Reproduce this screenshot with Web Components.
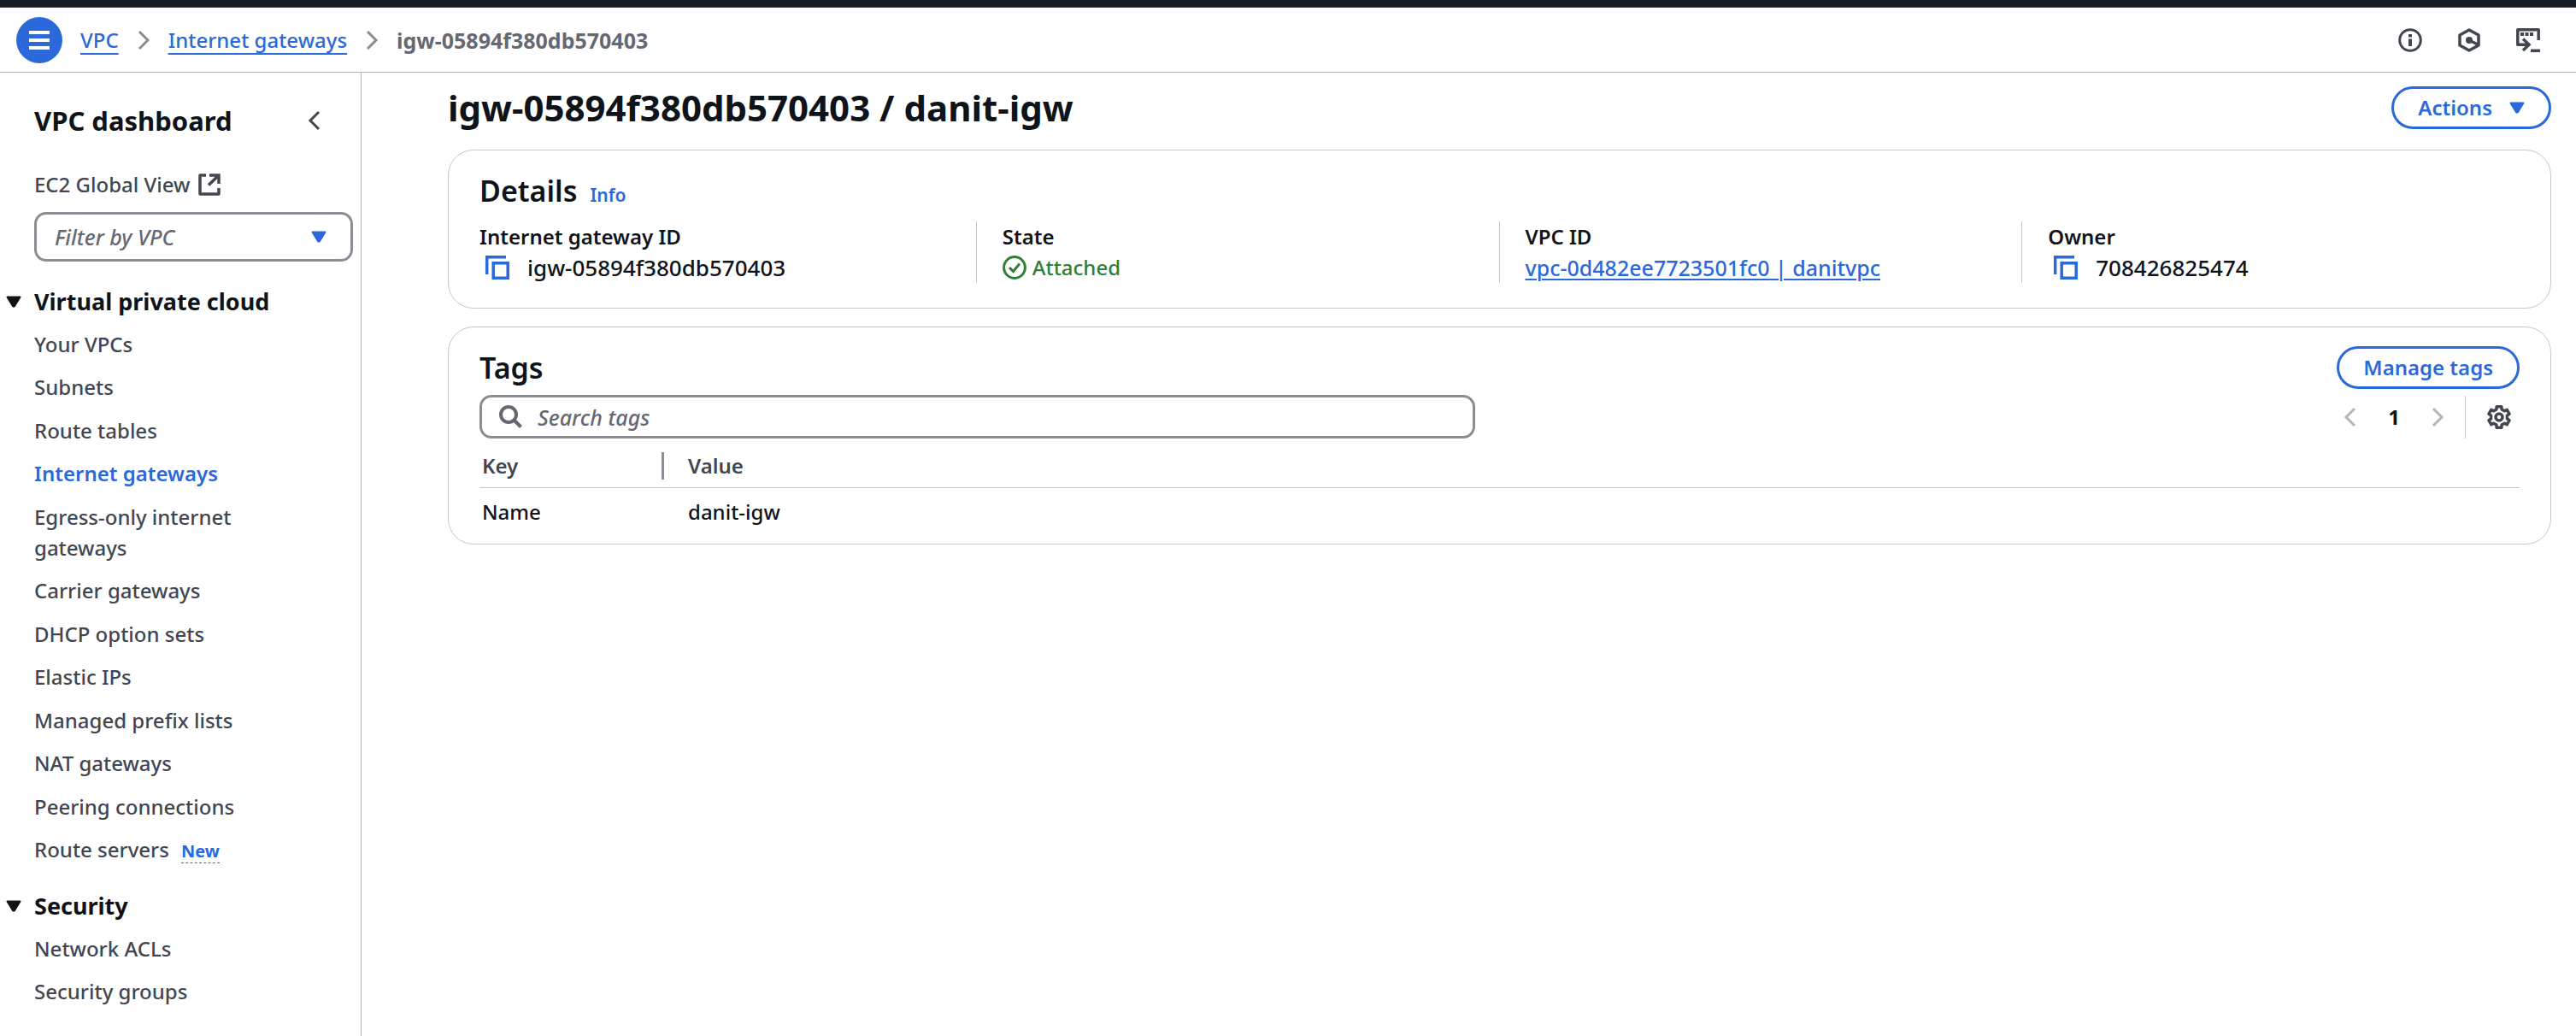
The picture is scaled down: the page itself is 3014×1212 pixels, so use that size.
<!DOCTYPE html>
<html lang="en">
<head>
<meta charset="utf-8">
<title>igw-05894f380db570403 | VPC Console</title>
<style>
  :root {
    --blue: #2b69da;
    --ink: #0f141a;
    --muted: #424650;
    --hint: #656871;
    --line: #c6c6cd;
    --field: #8c8c94;
    --bold: 620;
    --heading: 700;
  }
  body {
    margin: 0;
    background: #fff;
    color: var(--ink);
    font: 460 24px/36px "Noto Sans", "Open Sans", sans-serif;
  }
</style>
</head>
<body>
<console-app></console-app>
<script>
const define = (name, html, setup) => {
  const template = document.createElement('template');
  template.innerHTML = html;
  customElements.define(name, class extends HTMLElement {
    constructor() {
      super();
      this.attachShadow({ mode: 'open' }).append(template.content.cloneNode(true));
    }
    connectedCallback() {
      if (setup && !this.ready) { this.ready = true; setup(this, this.shadowRoot); }
    }
  });
};

/* Outline of the six-lobed settings gear, centred in a 28x30 box. */
const gear = () => {
  const points = [];
  for (let k = 0; k < 6; k++) {
    for (const [offset, radius] of [[-13, 12.6], [13, 12.6], [19, 9.6], [41, 9.6]]) {
      const a = (k * 60 - 90 + offset) * Math.PI / 180;
      points.push((14 + radius * Math.cos(a)).toFixed(2) + ' ' + (15 + radius * Math.sin(a)).toFixed(2));
    }
  }
  return 'M' + points.join('L') + 'Z';
};

/* name: [width, height, stroke width, markup] */
const icons = {
  menu: [24, 22, 4, '<path d="M0 2h24M0 11h24M0 20h24"/>'],
  right: [14, 24, 3, '<path d="M2 2l10 10L2 22"/>'],
  left: [14, 24, 3, '<path d="M12 2L2 12l10 10"/>'],
  info: [28, 28, 3, '<circle cx="14" cy="14" r="12.3"/><path stroke-width="4" d="M14 7v3.5M14 12.500v8.500"/>'],
  hex: [26, 28, 3.5, '<path stroke-linejoin="round" d="M13 2l11 6v12l-11 6-11-6V8z"/><circle cx="13" cy="14" r="4" fill="currentColor" stroke="none"/><path d="M13 14l11 5.500"/>'],
  shell: [28, 28, 3.5, '<path stroke-linejoin="round" d="M26.200 14V1.800H1.800v17.400H16"/><path d="M8 12.500l7 6.700-7 6.700"/><path d="M17 26.300h11"/><path stroke-width="4" stroke-dasharray="4 1.500" d="M5 7h15"/>'],
  external: [26, 26, 3.5, '<path stroke-linejoin="round" d="M9 2H2v22h22v-7"/><path d="M13 2h11v10M24 2L12 13.500"/>'],
  down: [18, 14, 2, '<path fill="currentColor" stroke-linejoin="round" d="M1.500 1.500h15L9.800 12.600h-1.600z"/>'],
  copy: [28, 28, 3.5, '<path d="M24 1.700H1.700V22"/><path d="M9.200 8.800h17v17.500h-17z"/>'],
  check: [28, 28, 3, '<circle cx="14" cy="14" r="12.400"/><path d="M8 14l4.500 4.500L20 9.500"/>'],
  search: [27, 27, 4, '<circle cx="11" cy="11" r="9"/><path d="M17.500 17.500l8 8"/>'],
  gear: [28, 30, 3.5, '<path stroke-linejoin="round" d="' + gear() + '"/><circle cx="14" cy="15" r="4"/>']
};

define('ui-icon', `
  <style>:host { display: inline-flex; flex: none; } svg { display: block; overflow: visible; }</style>
  <svg fill="none" stroke="currentColor" aria-hidden="true"></svg>`, (el, root) => {
  const [w, h, stroke, markup] = icons[el.getAttribute('name')];
  const svg = root.querySelector('svg');
  svg.setAttribute('width', w);
  svg.setAttribute('height', h);
  svg.setAttribute('viewBox', `0 0 ${w} ${h}`);
  svg.setAttribute('stroke-width', stroke);
  svg.innerHTML = markup;
});

define('pill-button', `
  <style>
    :host { display: block; flex: none; }
    button { display: flex; align-items: center; gap: 20px; height: 50px; box-sizing: border-box; padding: 0 28px;
      border: 3px solid var(--blue); border-radius: 25px; background: #fff; color: var(--blue);
      font: inherit; font-weight: var(--bold); cursor: pointer; }
  </style>
  <button type="button"><slot></slot></button>`);

define('icon-button', `
  <style>
    :host { display: block; flex: none; }
    button { display: flex; padding: 0; border: 0; background: none; color: inherit; cursor: pointer; }
  </style>
  <button type="button"><slot></slot></button>`, (el, root) =>
  root.querySelector('button').setAttribute('aria-label', el.getAttribute('label')));

define('breadcrumb-bar', `
  <style>
    :host { display: flex; align-items: center; justify-content: space-between; height: 75px;
      padding: 0 42px 0 19px; border-bottom: 1px solid #b4b4bb; }
    nav, .tools, ol { display: flex; align-items: center; }
    nav { gap: 21px; }
    ol { list-style: none; margin: 0; padding: 0; gap: 22px; color: var(--field); }
    .menu { display: flex; align-items: center; justify-content: center; width: 54px; height: 54px; padding: 0;
      border: 0; border-radius: 50%; background: var(--blue); color: #fff; }
    a { color: var(--blue); text-decoration: underline 2px; text-underline-offset: 6px; text-decoration-skip-ink: none; }
    li { display: flex; align-items: center; }
    [aria-current] { font-size: 25px; font-weight: 700; color: var(--hint); }
    .tools { gap: 42px; color: var(--muted); }
  </style>
  <nav aria-label="Breadcrumbs">
    <button class="menu" type="button" aria-label="Toggle navigation"><ui-icon name="menu"></ui-icon></button>
    <ol>
      <li><a href="#vpc">VPC</a></li>
      <li aria-hidden="true"><ui-icon name="right"></ui-icon></li>
      <li><a href="#gateways">Internet gateways</a></li>
      <li aria-hidden="true"><ui-icon name="right"></ui-icon></li>
      <li aria-current="page">igw-05894f380db570403</li>
    </ol>
  </nav>
  <div class="tools">
    <icon-button label="Help"><ui-icon name="info"></ui-icon></icon-button>
    <icon-button label="Assistant"><ui-icon name="hex"></ui-icon></icon-button>
    <icon-button label="Shell"><ui-icon name="shell"></ui-icon></icon-button>
  </div>`);

define('nav-group', `
  <style>
    :host { display: block; margin-top: 29px; }
    h3 { margin: 0 0 14px; font-size: 27px; line-height: 36px; font-weight: var(--heading); }
    button { display: flex; align-items: center; gap: 15px; margin-left: -33px; padding: 0; border: 0;
      background: none; color: inherit; font: inherit; }
    div { display: flex; flex-direction: column; gap: 14px; }
  </style>
  <h3><button type="button" aria-expanded="true"><ui-icon name="down"></ui-icon><span></span></button></h3>
  <div role="list"><slot></slot></div>`, (el, root) => {
  root.querySelector('span').textContent = el.getAttribute('heading');
});

define('nav-item', `
  <style>
    :host { display: flex; align-items: baseline; gap: 14px; color: var(--muted); }
    :host(:nth-child(even)) { padding-bottom: 1px; }
    a { color: inherit; text-decoration: none; }
    :host([current]) a { color: var(--blue); font-weight: var(--bold); }
  </style>
  <a href="#"><slot></slot></a><slot name="badge"></slot>`, (el, root) => {
  el.setAttribute('role', 'listitem');
  if (el.hasAttribute('current')) root.querySelector('a').setAttribute('aria-current', 'page');
});

define('side-nav', `
  <style>
    :host { display: block; flex: none; width: 422px; box-sizing: content-box; border-right: 1px solid #b4b4bb; }
    nav { padding: 36px 9px 34px 40px; }
    header { display: flex; align-items: center; justify-content: space-between; padding-right: 38px; color: var(--muted); }
    h2 { margin: 0; color: var(--ink); font-size: 31px; line-height: 40px; font-weight: var(--heading); }
    .global { display: flex; align-items: center; gap: 10px; margin-top: 37px; color: var(--muted); text-decoration: none; }
    label { display: grid; align-items: center; margin-top: 14px; }
    label > * { grid-area: 1 / 1; }
    label ui-icon { justify-self: end; margin-right: 31px; color: var(--blue); pointer-events: none; }
    select { appearance: none; width: 100%; height: 58px; padding: 0 21px; border: 3px solid var(--field);
      border-radius: 14px; background: #fff; color: var(--hint); font: inherit; font-size: 25px; font-style: italic; }
    .new { color: var(--blue); font-size: 20px; line-height: 26px; font-weight: 700; border-bottom: 1px dashed var(--blue); }
  </style>
  <nav aria-label="VPC">
    <header>
      <h2>VPC dashboard</h2>
      <icon-button label="Close navigation"><ui-icon name="left"></ui-icon></icon-button>
    </header>
    <a class="global" href="#global">EC2 Global View <ui-icon name="external"></ui-icon></a>
    <label><select aria-label="Filter by VPC"><option>Filter by VPC</option></select><ui-icon name="down"></ui-icon></label>
    <nav-group heading="Virtual private cloud">
      <nav-item>Your VPCs</nav-item>
      <nav-item>Subnets</nav-item>
      <nav-item>Route tables</nav-item>
      <nav-item current>Internet gateways</nav-item>
      <nav-item>Egress-only internet<br>gateways</nav-item>
      <nav-item>Carrier gateways</nav-item>
      <nav-item>DHCP option sets</nav-item>
      <nav-item>Elastic IPs</nav-item>
      <nav-item>Managed prefix lists</nav-item>
      <nav-item>NAT gateways</nav-item>
      <nav-item>Peering connections</nav-item>
      <nav-item>Route servers<span class="new" slot="badge">New</span></nav-item>
    </nav-group>
    <nav-group heading="Security">
      <nav-item>Network ACLs</nav-item>
      <nav-item>Security groups</nav-item>
    </nav-group>
  </nav>`);

define('ui-panel', `
  <style>
    :host { display: block; padding: 22px 36px 19px; border: 1px solid var(--line); border-radius: 30px; }
    header { display: flex; align-items: center; justify-content: space-between; min-height: 50px; }
    ::slotted([slot="title"]) { display: flex; align-items: baseline; gap: 15px; }
  </style>
  <header><slot name="title"></slot><slot name="actions"></slot></header>
  <slot></slot>`);

define('detail-field', `
  <style>
    :host { display: block; min-width: 0; padding-left: 30px; border-left: 1px solid var(--line); }
    :host(:first-child) { border-color: transparent; }
    .label { font-weight: var(--bold); }
    .value { display: flex; align-items: center; }
  </style>
  <div class="label"></div>
  <div class="value"><slot></slot></div>`, (el, root) => {
  root.querySelector('.label').textContent = el.getAttribute('label');
});

define('copy-value', `
  <style>
    :host { display: flex; align-items: center; gap: 21px; padding-left: 7px; font-size: 26px; }
    icon-button { color: var(--blue); }
  </style>
  <icon-button label="Copy"><ui-icon name="copy"></ui-icon></icon-button><slot></slot>`);

define('details-panel', `
  <style>
    :host { display: block; }
    h2 { margin: 0; font-size: 34px; line-height: 44px; font-weight: 640; }
    .info { color: var(--blue); font-size: 21px; font-weight: var(--bold); text-decoration: none; }
    .grid { display: grid; grid-template-columns: repeat(4, minmax(0, 1fr)); column-gap: 29px;
      margin: 11px 0 10px -31px; }
    .link { color: var(--blue); font-size: 25px; text-decoration: underline 2px; text-underline-offset: 3px; }
    .ok { display: flex; align-items: center; gap: 7px; color: #2f8036; }
  </style>
  <ui-panel>
    <div slot="title"><h2>Details</h2><a class="info" href="#info">Info</a></div>
    <div class="grid">
      <detail-field label="Internet gateway ID"><copy-value>igw-05894f380db570403</copy-value></detail-field>
      <detail-field label="State"><span class="ok"><ui-icon name="check"></ui-icon>Attached</span></detail-field>
      <detail-field label="VPC ID"><a class="link" href="#vpc">vpc-0d482ee7723501fc0 | danitvpc</a></detail-field>
      <detail-field label="Owner"><copy-value>708426825474</copy-value></detail-field>
    </div>
  </ui-panel>`);

define('tags-panel', `
  <style>
    :host { display: block; }
    h2 { margin: 0; font-size: 34px; line-height: 44px; font-weight: 640; }
    .bar, .pager, .search { display: flex; align-items: center; }
    .bar { justify-content: space-between; margin-top: 7px; }
    .search { flex: 0 1 1165px; height: 51px; box-sizing: border-box; gap: 18px; padding: 0 20px;
      border: 3px solid var(--field); border-radius: 14px; color: var(--hint); }
    input { flex: 1; min-width: 0; padding: 0; border: 0; outline: 0; background: none; color: var(--ink);
      font: inherit; font-size: 25px; }
    input::placeholder { color: var(--hint); font-style: italic; opacity: 1; }
    .pager { padding-right: 10px; color: #b4b4bb; }
    .page { width: 88px; padding: 0; border: 0; background: none; color: var(--ink); font: inherit; font-weight: 700; }
    .settings { display: flex; align-items: center; height: 50px; margin-left: 25px; padding-left: 25px;
      border-left: 1px solid var(--line); color: var(--muted); }
    table { width: 100%; table-layout: fixed; border-collapse: collapse; text-align: left; }
    th { padding: 16px 0 9px; border-bottom: 1px solid var(--line); color: var(--muted); font-weight: var(--bold); }
    th span { display: block; line-height: 32px; }
    th:first-child { width: 216px; }
    th:first-child span { padding-left: 3px; border-right: 3px solid var(--field); }
    th + th, td + td { padding-left: 28px; }
    td { padding: 10px 0 0 3px; }
  </style>
  <ui-panel>
    <h2 slot="title">Tags</h2>
    <pill-button slot="actions">Manage tags</pill-button>
    <div class="bar">
      <label class="search"><ui-icon name="search"></ui-icon><input type="search" aria-label="Search tags" placeholder="Search tags"></label>
      <div class="pager">
        <icon-button label="Previous page"><ui-icon name="left"></ui-icon></icon-button>
        <button class="page" type="button" aria-current="page">1</button>
        <icon-button label="Next page"><ui-icon name="right"></ui-icon></icon-button>
        <div class="settings"><icon-button label="Preferences"><ui-icon name="gear"></ui-icon></icon-button></div>
      </div>
    </div>
    <table>
      <thead><tr><th scope="col"><span>Key</span></th><th scope="col"><span>Value</span></th></tr></thead>
      <tbody><tr><td>Name</td><td>danit-igw</td></tr></tbody>
    </table>
  </ui-panel>`);

define('console-app', `
  <style>
    :host { display: flex; flex-direction: column; min-height: 100vh; }
    .top { height: 8px; background: #161d26; border-bottom: 1px solid #424650; }
    .body { display: flex; flex: 1; }
    main { flex: 1; min-width: 0; display: flex; flex-direction: column; gap: 21px; padding: 15px 29px 0 101px; }
    header { display: flex; align-items: center; justify-content: space-between; margin-bottom: 2px; }
    h1 { margin: 0; font-size: 42px; line-height: 52px; font-weight: 680; }
  </style>
  <div class="top"></div>
  <breadcrumb-bar></breadcrumb-bar>
  <div class="body">
    <side-nav></side-nav>
    <main>
      <header><h1>igw-05894f380db570403 / danit-igw</h1><pill-button>Actions <ui-icon name="down"></ui-icon></pill-button></header>
      <details-panel></details-panel>
      <tags-panel></tags-panel>
    </main>
  </div>`);
</script>
</body>
</html>
